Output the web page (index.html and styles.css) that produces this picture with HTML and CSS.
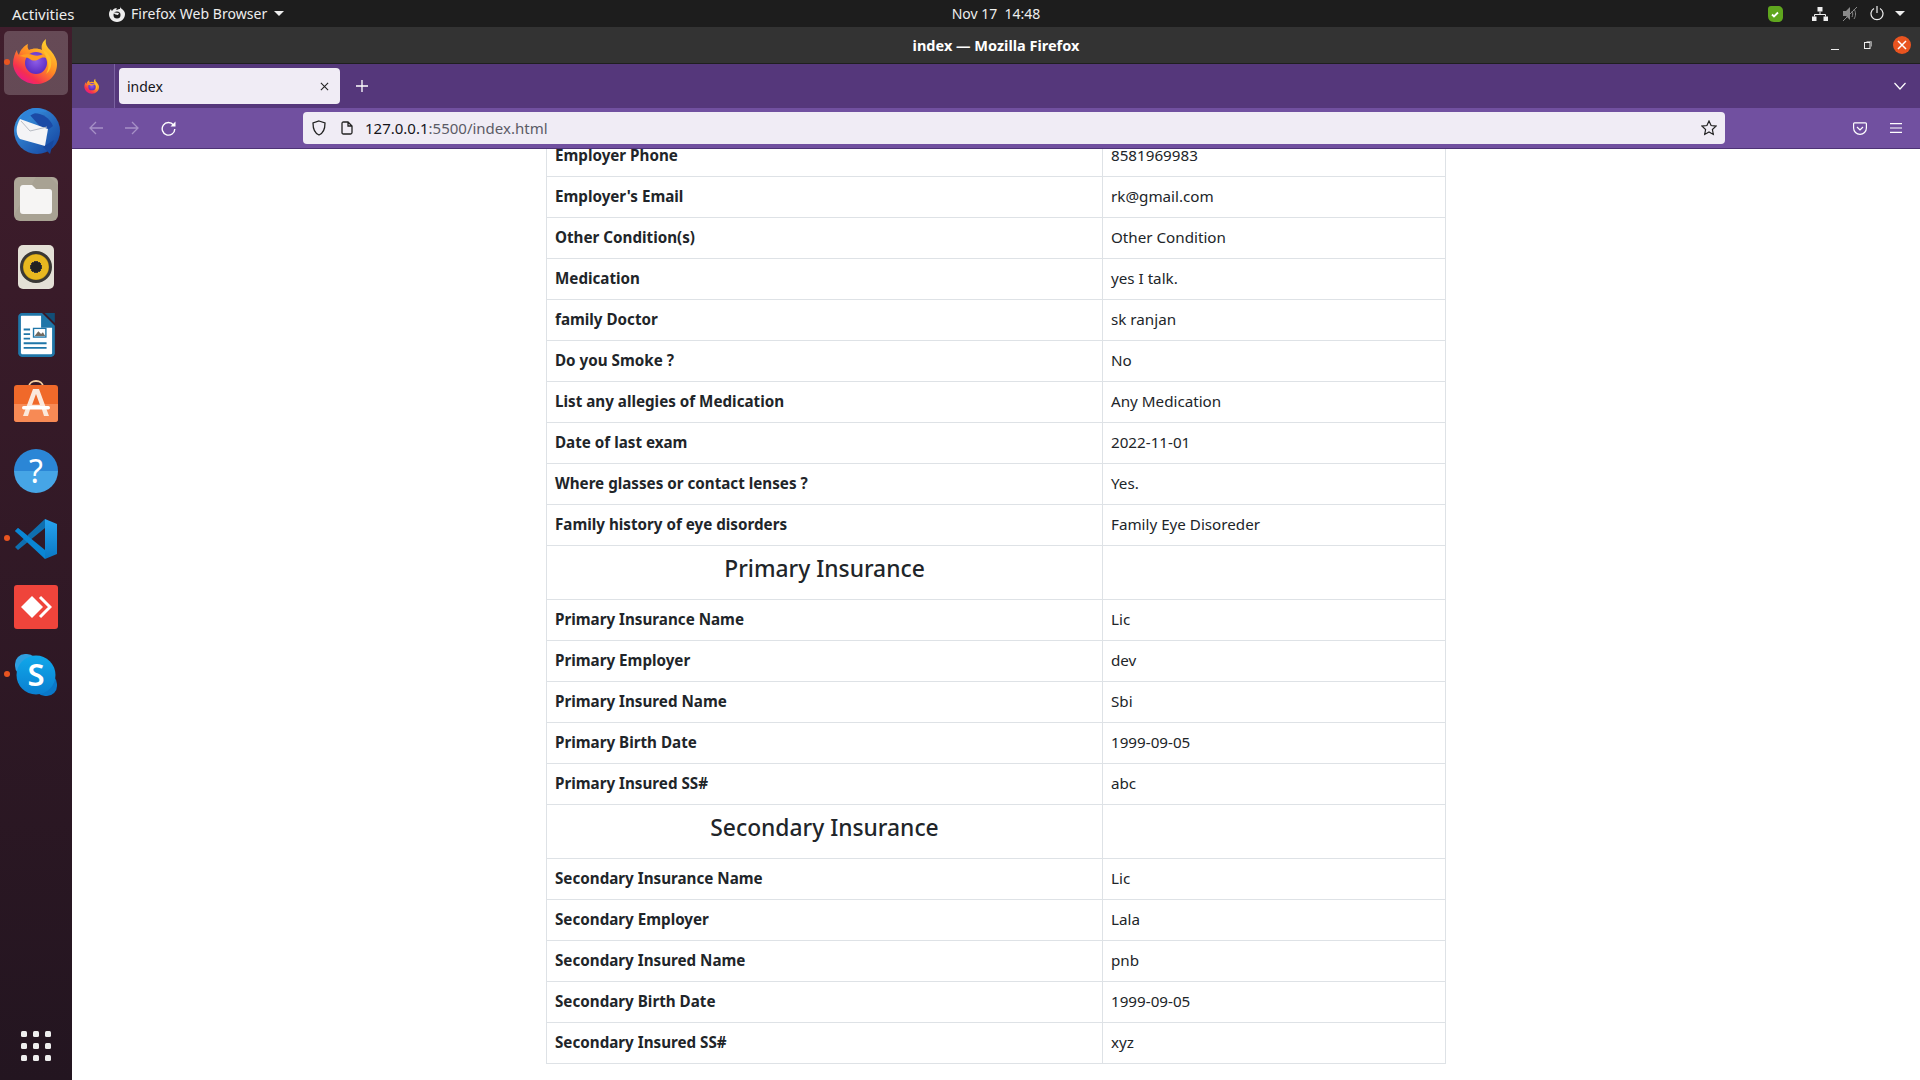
FILE: index.html
```html
<!DOCTYPE html>
<html lang="en">

<head>
    <meta charset="UTF-8">
    <title>index</title>
    <link rel="stylesheet" href="styles.css">
</head>

<body>
    <svg class="defs" width="0" height="0">
        <defs>
            <linearGradient id="ffBody" x1="0.8" y1="0.1" x2="0.2" y2="0.95">
                <stop offset="0" stop-color="#ffd02c" />
                <stop offset="0.45" stop-color="#ff8a24" />
                <stop offset="0.8" stop-color="#f5304f" />
                <stop offset="1" stop-color="#e9188f" />
            </linearGradient>
            <radialGradient id="ffCore" cx="0.5" cy="0.4" r="0.6">
                <stop offset="0" stop-color="#8f5ee8" />
                <stop offset="1" stop-color="#5a2bc0" />
            </radialGradient>
            <linearGradient id="tbBlue" x1="0" y1="0" x2="1" y2="1">
                <stop offset="0" stop-color="#3fa0e8" />
                <stop offset="1" stop-color="#123f9c" />
            </linearGradient>
            <linearGradient id="codeBlue" x1="0" y1="0" x2="0" y2="1">
                <stop offset="0" stop-color="#27a4f0" />
                <stop offset="1" stop-color="#0a78c4" />
            </linearGradient>
            <linearGradient id="skypeBlue" x1="0" y1="0" x2="0" y2="1">
                <stop offset="0" stop-color="#10a8ea" />
                <stop offset="1" stop-color="#0a7fd0" />
            </linearGradient>
            <symbol id="firefox" viewBox="0 0 48 48">
                <path fill="url(#ffBody)" d="M34 2c-1 5 1 8 5 12 4 5 6 9 6 13 0 12-9 20-21 20C12 47 2 38 1 27c0-6 2-11 4-14 0 2 1 4 2 5 1-5 5-9 9-11-1 3 0 5 1 6 4-2 9-2 13 0-1-4 0-8 4-11z" />
                <circle cx="24" cy="26" r="11" fill="url(#ffCore)" />
                <path fill="#ff9b22" d="M7 19c5-2 10-3 14-1 3 1 7 1 10-1 2 1 3 3 3 4-3-1-5 0-7 1-3 2-7 2-9 0-3-2-7-2-11-3z" />
                <path fill="#ffbf2b" d="M31 13c3 1 7 5 8 10 1 6-1 11-5 14 3-5 3-10 1-15-1-3-3-6-4-9z" />
            </symbol>
        </defs>
    </svg>

    <header class="topbar">
        <div class="topbar-left">
            <span class="activities">Activities</span>
            <span class="app-menu">
                <svg class="app-menu-icon" width="16" height="16" viewBox="0 0 16 16">
                    <path fill="#eee" d="M11 0c0 2 1 2 2 3 2 2 3 3 3 5 0 4-3 8-8 8s-8-4-8-8c0-2 1-4 2-5 0 1 1 2 1 2 1-2 3-3 5-3-1 1-1 2 0 2 1-1 2-1 3-1 0-1 0-2 0-3z" />
                    <circle cx="8" cy="9" r="3.5" fill="#1d1d1d" />
                    <path fill="#eee" d="M4 7c2-1 4 0 6 0l-1 2c-2 0-3-1-5-2z" />
                </svg>
                Firefox Web Browser
                <i class="caret"></i>
            </span>
        </div>
        <div class="clock">Nov 17&nbsp;&nbsp;14:48</div>
        <div class="tray">
            <svg class="tray-shield" width="16" height="16" viewBox="0 0 16 16">
                <path fill="#5fa61e" d="M1 3c0-2 1-3 3-3h7c3 0 5 2 5 5v6c0 3-2 5-5 5H7c-4 0-6-3-6-6z" />
                <path fill="none" stroke="#fff" stroke-width="1.8" d="M5 8.5l2 2 4-4" />
            </svg>
            <svg class="tray-net" width="16" height="14" viewBox="0 0 16 14">
                <path fill="#eee" d="M5.500 0h5v4.500h-5zM0 9.500h4.500V14H0zM11.500 9.500H16V14h-4.500z" />
                <path fill="none" stroke="#eee" d="M8 4.500v3M2.500 9.500v-2h11v2" />
            </svg>
            <svg class="tray-vol" width="16" height="16" viewBox="0 0 16 16">
                <path fill="#8a8a8a" d="M1 5h3l4-4v13l-4-4H1z" />
                <path fill="none" stroke="#8a8a8a" d="M10 5c1 2 1 4 0 6M12 3c2 3 2 7 0 10M1 15L15 1" />
            </svg>
            <svg class="tray-power" width="14" height="15" viewBox="0 0 14 15">
                <path fill="none" stroke="#eee" stroke-width="1.200" d="M4 2.500a6 6 0 1 0 6 0M7 0v7" />
            </svg>
            <i class="caret"></i>
        </div>
    </header>

    <div class="desktop">
        <nav class="dock">
            <div class="dock-item active">
                <i class="run-dot"></i>
                <svg class="dock-firefox" width="48" height="48"><use href="#firefox" /></svg>
            </div>
            <div class="dock-item">
                <svg width="50" height="50" viewBox="0 0 50 50">
                    <circle cx="26" cy="25" r="23" fill="url(#tbBlue)" />
                    <path fill="#1b4aa6" d="M18 8c10-3 20 2 24 12l-8 6z" />
                    <path fill="#2f83d8" d="M8 16C10 7 18 1 26 2c4 .5 8 2 10 4-8-1-15 1-19 6l-4 6z" />
                    <path fill="#f4f4f6" d="M9 13l28 10-3 17-25-7C4 28 5 20 9 13z" />
                    <path fill="none" stroke="#b8bcc4" d="M10 15l9 10 17-4" />
                    <path fill="#17489f" d="M32 41l7 7 4-14z" />
                </svg>
            </div>
            <div class="dock-item">
                <svg width="44" height="44" viewBox="0 0 44 44">
                    <rect width="44" height="44" rx="6" fill="#a8a293" />
                    <path fill="#b3ad9f" d="M24 0h14c4 0 6 2 6 6v2L36 0zM0 38l22-38H6C2 0 0 2 0 6z" opacity="0.500" />
                    <path fill="#f6f5f4" d="M6 11c0-1.500 1-3 3-3h9l4 4h13c2 0 3 1 3 3v19c0 2-1 3-3 3H9c-2 0-3-1-3-3z" />
                </svg>
            </div>
            <div class="dock-item">
                <div class="speaker-icon"><span class="speaker-cone"></span></div>
            </div>
            <div class="dock-item">
                <svg width="37" height="44" viewBox="0 0 40 48">
                    <path fill="#1f76a8" d="M4 0h22l14 14v30c0 2-2 4-4 4H4c-2 0-4-2-4-4V4c0-2 2-4 4-4z" />
                    <path fill="#fff" d="M4 3h21v13h12v28c0 .5-.5 1-1 1H4c-.5 0-1-.5-1-1V4c0-.5.5-1 1-1z" />
                    <path fill="#124e77" d="M29 0l11 11V0z" />
                    <path fill="#1f76a8" d="M6 17h7v2H6zM6 22h7v2H6zM6 27h7v2H6zM6 32h25v2H6zM6 37h25v2H6zM16 16h15v11H16z" />
                    <path fill="#fff" d="M17.500 17.500h12v8h-12z" />
                    <path fill="#706a60" d="M18 25l4-5 3 3 2-2 2.500 4z" />
                </svg>
            </div>
            <div class="dock-item">
                <svg class="dock-store" width="44" height="44" viewBox="0 0 44 44">
                    <path fill="none" stroke="#f5cfa0" stroke-width="1.800" d="M15 7c0-8 14-8 14 0" />
                    <rect y="5" width="44" height="37" rx="3" fill="#f0692a" />
                    <path fill="#f78a55" d="M0 24h44v15c0 2-1 3-3 3H3c-2 0-3-1-3-3z" />
                    <path fill="#fbe8dc" d="M19 9h6l10 27h-5l-2.500-8h-11L14 36H9zM22 14l-4 11h8z" />
                    <rect x="8" y="26" width="28" height="3.500" rx="1.700" fill="#fff" />
                </svg>
            </div>
            <div class="dock-item">
                <div class="help-icon">?</div>
            </div>
            <div class="dock-item">
                <i class="run-dot"></i>
                <svg width="44" height="44" viewBox="0 0 44 44">
                    <path fill="#0f6fb0" d="M1 14l3-3 10 8-3 3zM1 30l3 3 27-22v-9z" />
                    <path fill="#0a86d4" d="M1 14l3-3 27 22v9z" />
                    <path fill="url(#codeBlue)" d="M31 2l12 5v30l-12 5z" />
                </svg>
            </div>
            <div class="dock-item">
                <div class="anydesk-icon">
                    <svg width="32" height="24" viewBox="0 0 32 24">
                        <path fill="#fff" d="M12 1l11 11-11 11L1 12z" />
                        <path fill="none" stroke="#fff" stroke-width="3" d="M20 2l10 10-10 10" />
                    </svg>
                </div>
            </div>
            <div class="dock-item">
                <i class="run-dot"></i>
                <svg width="42" height="42" viewBox="0 0 42 42">
                    <rect width="22" height="22" rx="10" fill="#2f9fe0" />
                    <rect x="20" y="20" width="22" height="22" rx="10" fill="#0a78c8" />
                    <circle cx="21" cy="21" r="19.500" fill="url(#skypeBlue)" />
                    <text class="skype-letter" x="21" y="32" text-anchor="middle">S</text>
                </svg>
            </div>
            <div class="dock-grid">
                <i></i><i></i><i></i><i></i><i></i><i></i><i></i><i></i><i></i>
            </div>
        </nav>

        <div class="window">
            <div class="titlebar">
                <span></span>
                <div class="title">index — Mozilla Firefox</div>
                <div class="win-buttons">
                    <i class="win-min"></i>
                    <svg class="win-max" width="8" height="8" viewBox="0 0 8 8">
                        <rect x="0.500" y="1.500" width="5.500" height="6" fill="none" stroke="#eee" />
                        <path fill="none" stroke="#999" d="M2.500 .5h5v5" />
                    </svg>
                    <span class="win-close">
                        <svg width="10" height="10" viewBox="0 0 10 10">
                            <path stroke="#fff" stroke-width="1.500" d="M1 1l8 8M9 1l-8 8" />
                        </svg>
                    </span>
                </div>
            </div>

            <div class="tabbar">
                <div class="tab-firefox">
                    <svg width="16" height="16"><use href="#firefox" /></svg>
                </div>
                <div class="tab">
                    <span>index</span>
                    <svg width="9" height="9" viewBox="0 0 10 10">
                        <path stroke="#222" stroke-width="1.200" d="M1 1l8 8M9 1l-8 8" />
                    </svg>
                </div>
                <svg class="tab-new" width="12" height="12" viewBox="0 0 12 12">
                    <path stroke="#fff" stroke-width="1.300" d="M6 0v12M0 6h12" />
                </svg>
                <svg class="tab-list" width="12" height="8" viewBox="0 0 12 8">
                    <path fill="none" stroke="#fff" stroke-width="1.200" d="M.5 1l5.500 6 5.500-6" />
                </svg>
            </div>

            <div class="toolbar">
                <svg class="nav-btn" width="14" height="14" viewBox="0 0 14 14">
                    <path fill="none" stroke="#a690c6" stroke-width="1.300" d="M14 7H1M7 1L1 7l6 6" />
                </svg>
                <svg class="nav-btn" width="14" height="14" viewBox="0 0 14 14">
                    <path fill="none" stroke="#a690c6" stroke-width="1.300" d="M0 7h13M7 1l6 6-6 6" />
                </svg>
                <svg class="nav-btn" width="15" height="15" viewBox="0 0 15 15">
                    <path fill="none" stroke="#fff" stroke-width="1.400" d="M12.500 4A6.300 6.300 0 1 0 13.800 8" />
                    <path fill="#fff" d="M14.500 .5v5h-5z" />
                </svg>
                <div class="urlbar">
                    <svg class="url-shield" width="14" height="16" viewBox="0 0 14 16">
                        <path fill="none" stroke="#222" stroke-width="1.300" d="M7 1l6 2c0 6-1 10-6 12C2 13 1 9 1 3z" />
                    </svg>
                    <svg class="url-page" width="12" height="14" viewBox="0 0 12 14">
                        <path fill="none" stroke="#222" stroke-width="1.300" d="M2.500 1H7l4 4v6.500c0 1-.5 1.500-1.500 1.500h-7c-1 0-1.500-.5-1.500-1.500v-9c0-1 .5-1.500 1.500-1.500zM7 1v4h4" />
                    </svg>
                    <span class="url-text">127.0.0.1<span class="url-rest">:5500/index.html</span></span>
                    <svg class="url-star" width="16" height="16" viewBox="0 0 16 16">
                        <path fill="none" stroke="#222" stroke-width="1.200" d="M8 1l2.100 4.500 4.900.6-3.600 3.400.9 4.900L8 11.900l-4.300 2.500.9-4.900L1 6.100l4.900-.6z" />
                    </svg>
                </div>
                <svg class="tool-pocket" width="14" height="13" viewBox="0 0 14 13">
                    <path fill="none" stroke="#fff" stroke-width="1.200" d="M1.500 .8h11c.5 0 .9.400.9.900V6a6.400 6.400 0 0 1-12.800 0V1.700c0-.5.400-.9.900-.9zM4 5l3 3 3-3" />
                </svg>
                <svg class="tool-menu" width="12" height="10" viewBox="0 0 12 10">
                    <path stroke="#fff" stroke-width="1.200" d="M0 .6h12M0 5h12M0 9.400h12" />
                </svg>
            </div>

            <main class="content">
                <table class="details">
                    <tr><th>Employer Phone</th><td>8581969983</td></tr>
                    <tr><th>Employer's Email</th><td>rk@gmail.com</td></tr>
                    <tr><th>Other Condition(s)</th><td>Other Condition</td></tr>
                    <tr><th>Medication</th><td>yes I talk.</td></tr>
                    <tr><th>family Doctor</th><td>sk ranjan</td></tr>
                    <tr><th>Do you Smoke ?</th><td>No</td></tr>
                    <tr><th>List any allegies of Medication</th><td>Any Medication</td></tr>
                    <tr><th>Date of last exam</th><td>2022-11-01</td></tr>
                    <tr><th>Where glasses or contact lenses ?</th><td>Yes.</td></tr>
                    <tr><th>Family history of eye disorders</th><td>Family Eye Disoreder</td></tr>
                    <tr><th class="section"><h4>Primary Insurance</h4></th><td></td></tr>
                    <tr><th>Primary Insurance Name</th><td>Lic</td></tr>
                    <tr><th>Primary Employer</th><td>dev</td></tr>
                    <tr><th>Primary Insured Name</th><td>Sbi</td></tr>
                    <tr><th>Primary Birth Date</th><td>1999-09-05</td></tr>
                    <tr><th>Primary Insured SS#</th><td>abc</td></tr>
                    <tr><th class="section"><h4>Secondary Insurance</h4></th><td></td></tr>
                    <tr><th>Secondary Insurance Name</th><td>Lic</td></tr>
                    <tr><th>Secondary Employer</th><td>Lala</td></tr>
                    <tr><th>Secondary Insured Name</th><td>pnb</td></tr>
                    <tr><th>Secondary Birth Date</th><td>1999-09-05</td></tr>
                    <tr><th>Secondary Insured SS#</th><td>xyz</td></tr>
                </table>
            </main>
        </div>
    </div>
</body>

</html>
```

FILE: styles.css
```css
* {
    box-sizing: border-box;
}

html,
body {
    margin: 0;
    height: 100%;
    overflow: hidden;
}

body {
    font-family: "Noto Sans", "Open Sans", sans-serif;
    color: #212529;
    background: #fff;
    display: flex;
    flex-direction: column;
}

.defs {
    position: absolute;
}

svg {
    display: block;
    flex: none;
}

/* gnome top bar */
.topbar {
    height: 27px;
    flex: none;
    background: #1d1d1d;
    color: #eee;
    font-size: 14px;
    display: grid;
    grid-template-columns: 1fr auto 1fr;
    align-items: center;
    padding-left: 72px;
}

.topbar-left {
    display: flex;
    align-items: center;
    margin-left: -60px;
}

.activities {
    width: 97px;
    font-size: 15px;
}

.app-menu {
    display: flex;
    align-items: center;
    letter-spacing: 0.05px;
}

.app-menu-icon {
    margin-right: 6px;
}

.caret {
    display: inline-block;
    border: 5px solid transparent;
    border-top-color: #eee;
    border-bottom: 0;
    margin-left: 7px;
}

.tray {
    display: flex;
    align-items: center;
    justify-content: flex-end;
}

.tray-shield {
    margin-right: 29px;
}

.tray-net {
    margin-right: 14px;
}

.tray-vol {
    margin-right: 12px;
}

.tray-power {
    margin-right: 11px;
}

.tray .caret {
    margin: 0 15px 0 0;
}

.desktop {
    flex: 1;
    display: flex;
    min-height: 0;
}

/* ubuntu dock */
.dock {
    width: 72px;
    flex: none;
    background: linear-gradient(#401d2c, #231520);
    padding: 4px;
    display: flex;
    flex-direction: column;
    gap: 4px;
}

.dock-item {
    position: relative;
    height: 64px;
    border-radius: 5px;
    display: flex;
    align-items: center;
    justify-content: center;
}

.dock-item.active {
    background: rgba(255, 255, 255, 0.2);
}

.dock-firefox {
    margin-top: -4px;
}

.dock-store {
    margin-top: -3px;
}

.run-dot {
    position: absolute;
    left: 0;
    top: 28px;
    width: 6px;
    height: 6px;
    border-radius: 50%;
    background: #e95420;
}

.speaker-icon {
    width: 36px;
    height: 44px;
    border-radius: 5px;
    background: #e4e0d6;
    display: flex;
    align-items: center;
    justify-content: center;
}

.speaker-cone {
    width: 32px;
    height: 32px;
    border-radius: 50%;
    border: 3px solid #3a3835;
    background: radial-gradient(#222 0 5px, #3a3835 5px 6px, #e8b820 6px 12px, #b99212 13px);
}

.help-icon {
    width: 44px;
    height: 44px;
    border-radius: 50%;
    background: linear-gradient(#2b86d6 50%, #46a5e6 50%);
    color: #fff;
    font-size: 32px;
    line-height: 44px;
    text-align: center;
}

.anydesk-icon {
    width: 44px;
    height: 44px;
    border-radius: 3px;
    background: #ef443b;
    display: flex;
    align-items: center;
    justify-content: center;
}

.skype-letter {
    fill: #fff;
    font-size: 31px;
    font-weight: 600;
}

.dock-grid {
    margin-top: auto;
    margin-bottom: 15px;
    padding: 0 13px;
    height: 30px;
    display: grid;
    grid-template-columns: repeat(3, 6px);
    grid-template-rows: repeat(3, 6px);
    gap: 6px;
    justify-content: center;
}

.dock-grid i {
    border-radius: 1.500px;
    background: #eee;
}

/* firefox window */
.window {
    flex: 1;
    min-width: 0;
    display: flex;
    flex-direction: column;
}

.titlebar {
    height: 37px;
    flex: none;
    background: #333;
    border-bottom: 1px solid #1f1f1f;
    color: #fff;
    font-size: 14.500px;
    font-weight: 700;
    display: grid;
    grid-template-columns: 1fr auto 1fr;
    align-items: center;
}

.win-buttons {
    display: flex;
    align-items: center;
    justify-content: flex-end;
    padding-right: 9px;
}

.win-min {
    width: 8px;
    height: 1px;
    margin: 8px 25px 0 0;
    background: #eee;
}

.win-max {
    margin-right: 21px;
}

.win-close {
    width: 18px;
    height: 18px;
    border-radius: 50%;
    background: #e95420;
    display: flex;
    align-items: center;
    justify-content: center;
}

.tabbar {
    height: 44px;
    flex: none;
    background: #55377b;
    display: flex;
    align-items: center;
}

.tab-firefox {
    width: 43px;
    height: 100%;
    border-right: 1px solid #7a62a0;
    padding: 14px 0 0 12px;
    background: #5b3f80;
}

.tab {
    width: 221px;
    height: 36px;
    margin-left: 4px;
    padding: 0 11px 0 8px;
    border-radius: 4px;
    background: #f0ecf5;
    font-size: 14px;
    color: #15141a;
    display: flex;
    align-items: center;
    justify-content: space-between;
}

.tab-new {
    margin-left: 16px;
}

.tab-list {
    margin-left: auto;
    margin-right: 14px;
}

.toolbar {
    height: 41px;
    flex: none;
    background: #7150a0;
    border-bottom: 1px solid #4d3275;
    display: flex;
    align-items: center;
    padding-left: 17px;
}

.nav-btn {
    margin-right: 22px;
}

.urlbar {
    width: 1422px;
    height: 32px;
    margin-left: 105px;
    border-radius: 4px;
    background: #f0ecf5;
    font-size: 15px;
    display: flex;
    align-items: center;
    padding-left: 9px;
    color: #15141a;
}

.url-page {
    margin-left: 15px;
}

.url-text {
    margin-left: 12px;
}

.url-rest {
    color: #5b5b66;
}

.url-star {
    margin-left: auto;
    margin-right: 8px;
}

.tool-pocket {
    margin-left: 128px;
}

.tool-menu {
    margin-left: 23px;
}

/* page, scrolled down a bit */
.content {
    flex: 1;
    min-height: 0;
    overflow: hidden;
}

.details {
    width: 900px;
    margin: -14px auto 0;
    border-collapse: collapse;
    table-layout: fixed;
    font-size: 15.200px;
    line-height: 24px;
}

.details th,
.details td {
    border: 1px solid #dee2e6;
    padding: 7px 8px 9px;
    text-align: left;
    vertical-align: top;
}

.details th {
    width: 556px;
    font-weight: 700;
}

.details th.section {
    padding-top: 8px;
    padding-bottom: 8px;
    text-align: center;
}

.details h4 {
    margin: 0 0 8px;
    font-size: 22.800px;
    line-height: 29px;
    font-weight: 500;
}
```
